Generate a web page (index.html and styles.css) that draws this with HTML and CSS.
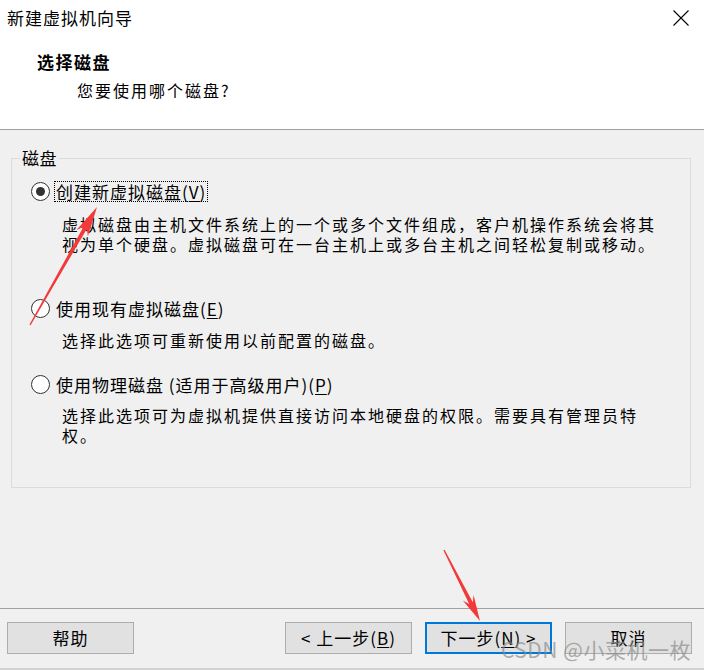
FILE: index.html
```html
<!DOCTYPE html>
<html lang="zh-CN">
<head>
<meta charset="utf-8">
<title>新建虚拟机向导</title>
<link rel="stylesheet" href="styles.css">
</head>
<body>
<div class="window">
  <header class="wiz-header">
    <div class="titlebar">
      <span class="title">新建虚拟机向导</span>
      <span class="close" aria-label="关闭">
        <svg width="16" height="16" viewBox="0 0 16 16"><path d="M0.5 0.5 L15.5 15.5 M15.5 0.5 L0.5 15.5" stroke="#000" stroke-width="1.1" fill="none"/></svg>
      </span>
    </div>
    <div class="heading">选择磁盘</div>
    <div class="subheading">您要使用哪个磁盘?</div>
  </header>

  <main class="wiz-body">
    <fieldset class="group">
      <legend class="group-label">磁盘</legend>

      <div class="option opt-first">
        <span class="radio checked"></span>
        <span class="label focused">创建新虚拟磁盘(<u>V</u>)</span>
      </div>
      <p class="desc d1">虚拟磁盘由主机文件系统上的一个或多个文件组成，客户机操作系统会将其视为单个硬盘。虚拟磁盘可在一台主机上或多台主机之间轻松复制或移动。</p>

      <div class="option opt-second">
        <span class="radio"></span>
        <span class="label">使用现有虚拟磁盘(<u>E</u>)</span>
      </div>
      <p class="desc d2">选择此选项可重新使用以前配置的磁盘。</p>

      <div class="option opt-third">
        <span class="radio"></span>
        <span class="label">使用物理磁盘 (适用于高级用户)(<u>P</u>)</span>
      </div>
      <p class="desc d3">选择此选项可为虚拟机提供直接访问本地硬盘的权限。需要具有管理员特权。</p>
    </fieldset>
  </main>

  <footer class="wiz-footer">
    <button class="btn btn-help">帮助</button>
    <button class="btn">&lt; 上一步(<u>B</u>)</button>
    <button class="btn btn-primary">下一步(<u>N</u>) &gt;</button>
    <button class="btn">取消</button>
  </footer>

  <svg class="annot" width="704" height="670" viewBox="0 0 704 670">
    <polygon fill="#f23a3a" points="97,207 87.9,236.3 86.8,228.9 30.6,325.3 29.4,324.7 83.4,226.9 76.5,229.9"/>
    <polygon fill="#f23a3a" points="480,621 473.6,595.1 472.8,602.3 444.6,549.7 443.4,550.3 469.2,604.1 462.8,600.5"/>
  </svg>
  <div class="watermark">CSDN @小菜机一枚</div>
</div>
</body>
</html>
```

FILE: styles.css
```css
* { box-sizing: border-box; }

html, body {
  margin: 0;
  padding: 0;
}

body {
  font-family: "Noto Sans CJK SC", "Noto Sans", sans-serif;
  color: #000;
  background: #f0f0f0;
}

.window {
  position: relative;
  width: 704px;
  height: 670px;
  display: flex;
  flex-direction: column;
  background: #f0f0f0;
  overflow: hidden;
}

/* header */
.wiz-header {
  height: 130px;
  flex: none;
  background: #fff;
  border-bottom: 1px solid #a0a0a0;
}

.titlebar {
  height: 36px;
  display: flex;
  justify-content: space-between;
  align-items: flex-start;
}

.title {
  padding-left: 7px;
  font-size: 17px;
  letter-spacing: 1px;
  line-height: 36px;
}

.close {
  margin: 10px 15px 0 0;
  width: 16px;
  height: 16px;
  display: block;
}
.close svg { display: block; }

.heading {
  margin-top: 16px;
  padding-left: 37px;
  font-size: 17px;
  font-weight: bold;
  letter-spacing: 1.5px;
  line-height: 20px;
}

.subheading {
  margin-top: 8px;
  padding-left: 77px;
  font-size: 16px;
  letter-spacing: 2px;
  line-height: 20px;
}

/* body */
.wiz-body {
  flex: 1;
}

.group {
  margin: 19px 13px 0 11px;
  padding: 14px 0 42px 0;
  border: 1px solid #dcdcdc;
  min-width: 0;
}

.group-label {
  margin-left: 8px;
  padding: 0 2px;
  font-size: 17px;
  line-height: 18px;
  letter-spacing: 0.5px;
}

.option {
  display: flex;
  align-items: center;
  height: 21px;
  padding-left: 19px;
}

.radio {
  width: 19px;
  height: 19px;
  border: 1px solid #333;
  border-radius: 50%;
  background: #fff;
  display: flex;
  align-items: center;
  justify-content: center;
  flex: none;
}
.radio.checked::after {
  content: "";
  width: 9px;
  height: 9px;
  border-radius: 50%;
  background: #333;
}

.label {
  margin-left: 4px;
  padding: 0 1px;
  border: 1px dotted transparent;
  font-size: 17px;
  letter-spacing: 1px;
  line-height: 19px;
}
.label.focused { border-color: #000; }

.label u, .btn u {
  text-decoration-thickness: 1px;
  text-underline-offset: 2px;
}

.desc {
  margin: 0;
  padding-left: 50px;
  width: 652px;
  font-size: 16px;
  letter-spacing: 2px;
  line-height: 20px;
}

.d1 { margin-top: 12px; }
.opt-second { margin-top: 44px; }
.d2 { margin-top: 11px; }
.opt-third { margin-top: 24px; }
.d3 { margin-top: 10px; }

/* footer */
.wiz-footer {
  flex: none;
  height: 62px;
  border-top: 1px solid #a0a0a0;
  border-bottom: 2px solid #d2d2d2;
  padding: 13px 12px 0 7px;
  display: flex;
  align-items: flex-start;
  gap: 13px;
}

.btn {
  width: 127px;
  height: 32px;
  border: 1px solid #adadad;
  background: #e1e1e1;
  font-family: "Noto Sans CJK SC", "Noto Sans", sans-serif;
  font-size: 17px;
  letter-spacing: 1px;
  color: #000;
  padding: 0;
  line-height: 28px;
}

.btn-help { margin-right: auto; }

.btn-primary {
  border: 2px solid #0078d7;
}

/* screenshot annotations */
.annot {
  position: absolute;
  left: 0;
  top: 0;
  pointer-events: none;
}

.watermark {
  position: absolute;
  right: 13px;
  bottom: 8px;
  font-family: "Noto Sans CJK SC", "Noto Sans", sans-serif;
  font-size: 21px;
  line-height: 26px;
  color: rgba(140, 140, 140, 0.7);
  letter-spacing: 0.5px;
  pointer-events: none;
}
```
